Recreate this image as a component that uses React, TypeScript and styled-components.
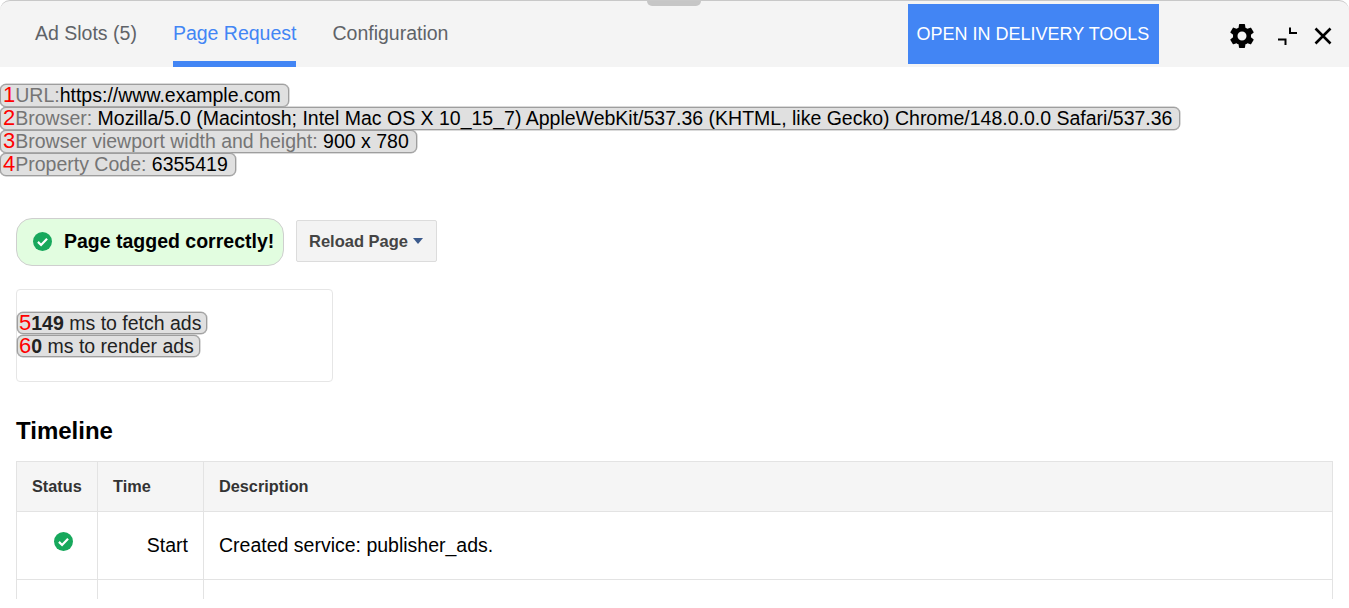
import React from 'react';
import styled, { createGlobalStyle } from 'styled-components';

const GlobalStyle = createGlobalStyle`
  html, body {
    margin: 0;
    background: #fff;
    font-family: "Liberation Sans", Arial, sans-serif;
  }
`;

const Panel = styled.div`
  height: 599px;
  overflow: hidden;
  background: #fff;
`;

const Header = styled.header`
  position: relative;
  display: flex;
  align-items: flex-start;
  height: 67px;
  box-sizing: border-box;
  padding-left: 17px;
  background: #f4f4f4;
  border-top: 1px solid #c8c8c8;
  border-radius: 10px 10px 0 0;
`;

const DragHandle = styled.div`
  position: absolute;
  top: 0;
  left: 647px;
  width: 54px;
  height: 5px;
  background: #c6c6c6;
  border-radius: 0 0 5px 5px;
`;

const Tab = styled.div<{ $active?: boolean }>`
  height: 66px;
  box-sizing: border-box;
  margin: 0 18px;
  padding-top: 21px;
  font-size: 19.5px;
  line-height: 22px;
  white-space: nowrap;
  color: ${(p) => (p.$active ? '#4285f4' : '#5f6368')};
  border-bottom: 6px solid ${(p) => (p.$active ? '#4285f4' : 'transparent')};
`;

const DeliveryButton = styled.button`
  width: 251px;
  height: 60px;
  margin: 3px 0 0 442px;
  padding: 0 2px 0 0;
  border: 0;
  background: #4285f4;
  color: #fff;
  font: 18px/22px "Liberation Sans", Arial, sans-serif;
  text-transform: uppercase;
`;

const IconRow = styled.div`
  display: flex;
  align-items: center;
  gap: 13px;
  height: 28px;
  margin: 21px 0 0 62px;
`;

const IconButton = styled.span<{ $width: number }>`
  display: flex;
  justify-content: center;
  width: ${(p) => p.$width}px;
  color: #000;
`;

const Body = styled.main`
  padding-top: 17px;
`;

const InfoList = styled.div`
  display: flex;
  flex-direction: column;
  align-items: flex-start;
`;

const Chip = styled.div`
  display: inline-block;
  box-sizing: border-box;
  height: 23px;
  padding: 0 7px 0 2px;
  font-size: 19.5px;
  line-height: 20px;
  color: #000;
  white-space: nowrap;
  background: #e0e0e0;
  border: 1px solid #9e9e9e;
  border-radius: 6px;
  box-shadow: 0 0 0 0.5px #b5b5b5;
`;

const ChipNumber = styled.span`
  color: #f00;
  font-size: 22px;
`;

const ChipLabel = styled.span`
  color: #757575;
`;

const StatusRow = styled.div`
  display: flex;
  align-items: flex-start;
  gap: 12px;
  margin: 42px 0 0 16px;
`;

const SuccessPill = styled.div`
  display: flex;
  align-items: center;
  gap: 12px;
  width: 268px;
  height: 48px;
  box-sizing: border-box;
  padding: 0 0 2px 16px;
  font-size: 19.5px;
  font-weight: 700;
  white-space: nowrap;
  color: #000;
  background: #e2fde0;
  border: 1px solid #cfcfcf;
  border-radius: 16px;
`;

const ReloadButton = styled.button`
  display: flex;
  align-items: center;
  gap: 5px;
  width: 141px;
  height: 42px;
  box-sizing: border-box;
  margin-top: 2px;
  padding: 0 0 0 12px;
  font: 700 16.5px "Liberation Sans", Arial, sans-serif;
  white-space: nowrap;
  color: #444;
  background: #f3f3f3;
  border: 1px solid #dcdcdc;
  border-radius: 2px;
`;

const Caret = styled.span`
  width: 0;
  height: 0;
  border-left: 5.5px solid transparent;
  border-right: 5.5px solid transparent;
  border-top: 6px solid #3b5a8c;
`;

const MetricsCard = styled.section`
  display: flex;
  flex-direction: column;
  align-items: flex-start;
  width: 317px;
  height: 93px;
  box-sizing: border-box;
  margin: 23px 0 0 16px;
  padding-top: 22px;
  background: #fff;
  border: 1px solid #e6e6e6;
  border-radius: 4px;
  ${Chip} {
    height: 22px;
    padding: 0 5px 0 1px;
    margin-bottom: 1px;
    color: #222;
  }
`;

const SectionTitle = styled.h2`
  margin: 35px 0 16px 16px;
  font-size: 24px;
  line-height: 28px;
  font-weight: 700;
  color: #000;
`;

const TimelineTable = styled.table`
  width: 1317px;
  margin-left: 16px;
  border-collapse: collapse;
  table-layout: fixed;
  font-size: 19.5px;
  color: #000;
`;

const HeadCell = styled.th`
  height: 50px;
  box-sizing: border-box;
  padding: 0 15px;
  font-size: 16.3px;
  font-weight: 700;
  text-align: left;
  color: #333;
  background: #f5f5f5;
  border: 1px solid #e3e3e3;
`;

const Cell = styled.td<{ $align?: string }>`
  height: 68px;
  box-sizing: border-box;
  padding: 0 15px;
  text-align: ${(p) => p.$align || 'left'};
  border: 1px solid #e3e3e3;
`;

const StatusIconWrap = styled.div`
  display: flex;
  justify-content: center;
  margin: -8px 0 0 13px;
`;

const CheckIcon: React.FC<{ size: number }> = ({ size }) => (
  <svg width={size} height={size} viewBox="0 0 20 20">
    <circle cx="10" cy="10" r="10" fill="#17a85c" />
    <path d="M5.2 10.4l3.3 3.3 6.3-6.6" fill="none" stroke="#fff" strokeWidth="2.3" />
  </svg>
);

const App: React.FC = () => (
  <Panel>
    <GlobalStyle />
    <Header>
      <DragHandle />
      <Tab>Ad Slots (5)</Tab>
      <Tab $active>Page Request</Tab>
      <Tab>Configuration</Tab>
      <DeliveryButton>Open in Delivery Tools</DeliveryButton>
      <IconRow>
        <IconButton $width={42}>
          <svg width="30" height="30" viewBox="0 0 24 24" fill="currentColor">
            <path d="M19.14 12.94c.04-.3.06-.61.06-.94 0-.32-.02-.64-.07-.94l2.03-1.58a.49.49 0 0 0 .12-.61l-1.92-3.32a.488.488 0 0 0-.59-.22l-2.39.96c-.5-.38-1.03-.7-1.62-.94l-.36-2.54a.484.484 0 0 0-.48-.41h-3.84c-.24 0-.43.17-.47.41l-.36 2.54c-.59.24-1.13.57-1.62.94l-2.39-.96c-.22-.08-.47 0-.59.22L2.74 8.87c-.12.21-.08.47.12.61l2.03 1.58c-.05.3-.09.63-.09.94s.02.64.07.94l-2.03 1.58a.49.49 0 0 0-.12.61l1.92 3.32c.12.22.37.29.59.22l2.39-.96c.5.38 1.03.7 1.62.94l.36 2.54c.05.24.24.41.48.41h3.84c.24 0 .44-.17.47-.41l.36-2.54c.59-.24 1.13-.56 1.62-.94l2.39.96c.22.08.47 0 .59-.22l1.92-3.32c.12-.22.07-.47-.12-.61l-2.01-1.58zM12 15.6A3.6 3.6 0 1 1 12 8.4a3.6 3.6 0 0 1 0 7.2z" />
          </svg>
        </IconButton>
        <IconButton $width={22}>
          <svg width="22" height="22" viewBox="0 0 22 22" fill="none" stroke="currentColor" strokeWidth="2">
            <path d="M2 14.5h7.5V20M14 2.5V8h7" />
          </svg>
        </IconButton>
        <IconButton $width={24}>
          <svg width="24" height="24" viewBox="0 0 24 24" fill="none" stroke="currentColor" strokeWidth="2.6">
            <path d="M4.5 4.5l15 15M19.5 4.5l-15 15" />
          </svg>
        </IconButton>
      </IconRow>
    </Header>

    <Body>
      <InfoList>
        <Chip>
          <ChipNumber>1</ChipNumber>
          <ChipLabel>URL:</ChipLabel>https://www.example.com
        </Chip>
        <Chip>
          <ChipNumber>2</ChipNumber>
          <ChipLabel>Browser: </ChipLabel>
          Mozilla/5.0 (Macintosh; Intel Mac OS X 10_15_7) AppleWebKit/537.36 (KHTML, like Gecko) Chrome/148.0.0.0 Safari/537.36
        </Chip>
        <Chip>
          <ChipNumber>3</ChipNumber>
          <ChipLabel>Browser viewport width and height: </ChipLabel>900 x 780
        </Chip>
        <Chip>
          <ChipNumber>4</ChipNumber>
          <ChipLabel>Property Code: </ChipLabel>6355419
        </Chip>
      </InfoList>

      <StatusRow>
        <SuccessPill>
          <CheckIcon size={19} />
          Page tagged correctly!
        </SuccessPill>
        <ReloadButton>
          Reload Page
          <Caret />
        </ReloadButton>
      </StatusRow>

      <MetricsCard>
        <Chip>
          <ChipNumber>5</ChipNumber>
          <strong>149</strong> ms to fetch ads
        </Chip>
        <Chip>
          <ChipNumber>6</ChipNumber>
          <strong>0</strong> ms to render ads
        </Chip>
      </MetricsCard>

      <SectionTitle>Timeline</SectionTitle>
      <TimelineTable>
        <colgroup>
          <col width="81" />
          <col width="106" />
          <col />
        </colgroup>
        <thead>
          <tr>
            <HeadCell>Status</HeadCell>
            <HeadCell>Time</HeadCell>
            <HeadCell>Description</HeadCell>
          </tr>
        </thead>
        <tbody>
          <tr>
            <Cell>
              <StatusIconWrap>
                <CheckIcon size={19} />
              </StatusIconWrap>
            </Cell>
            <Cell $align="right">Start</Cell>
            <Cell>Created service: publisher_ads.</Cell>
          </tr>
          <tr>
            <Cell />
            <Cell />
            <Cell />
          </tr>
        </tbody>
      </TimelineTable>
    </Body>
  </Panel>
);

export default App;
